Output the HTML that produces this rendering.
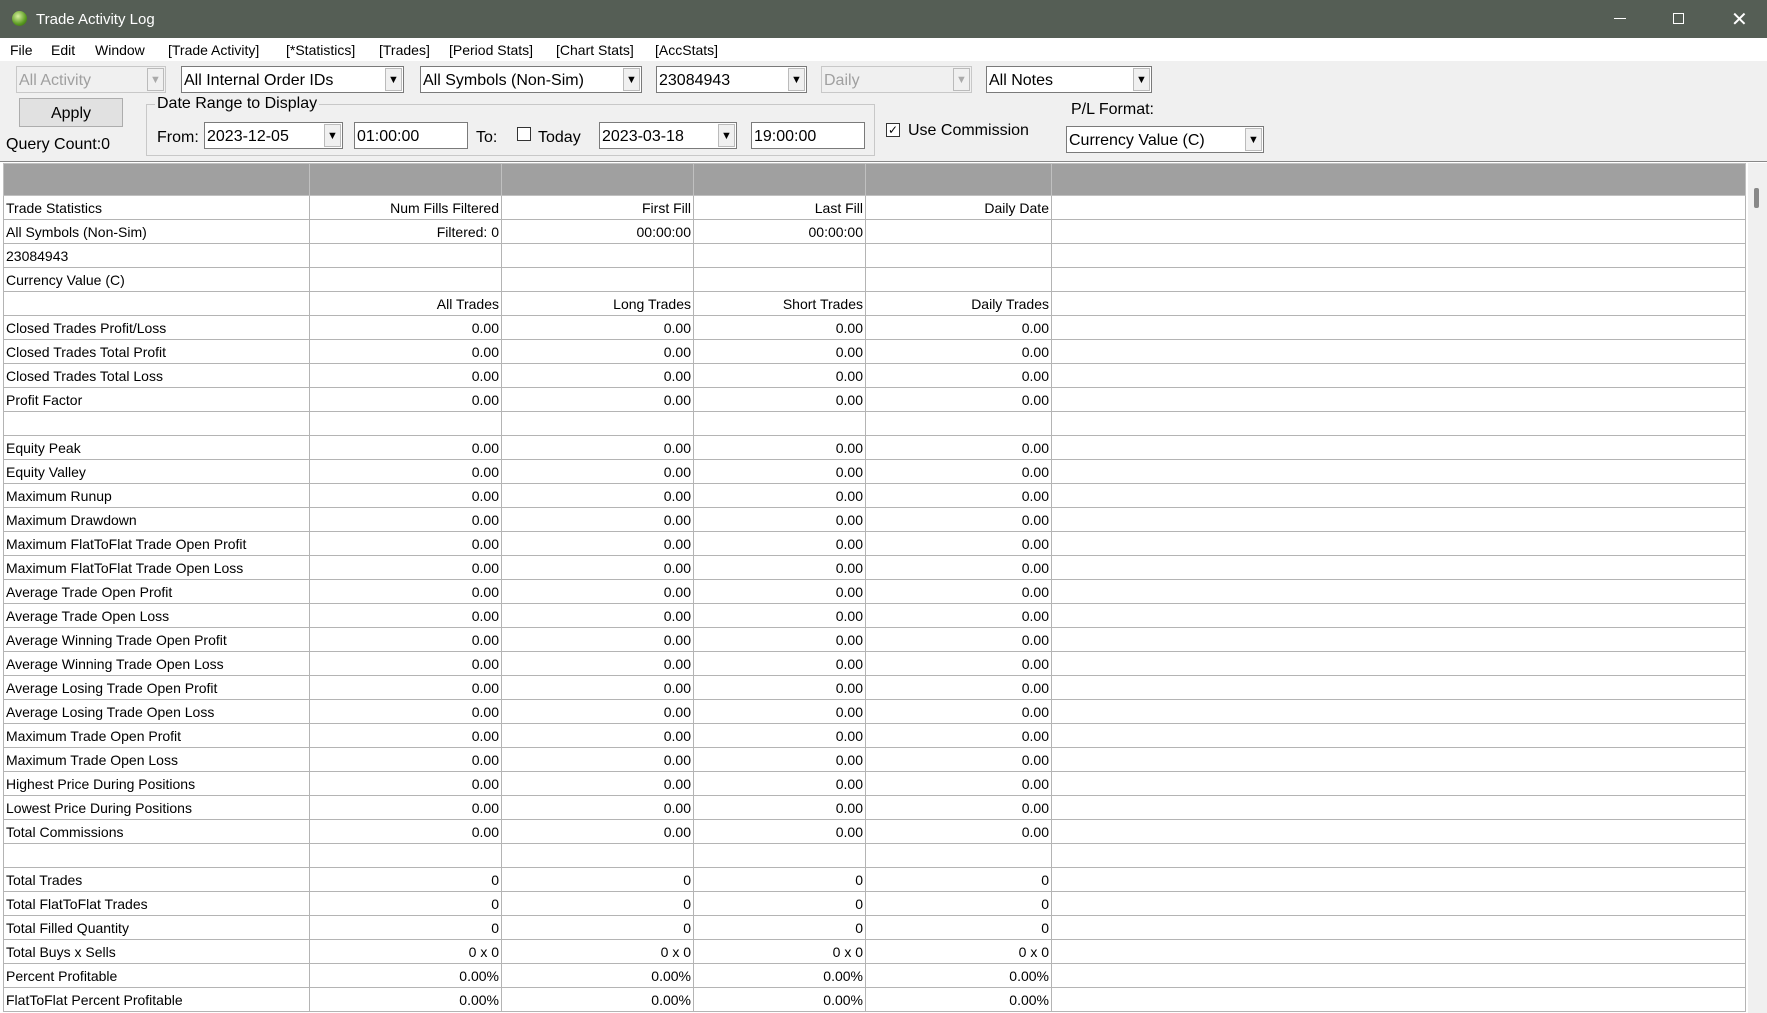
<!DOCTYPE html>
<html><head><meta charset="utf-8"><style>
*{box-sizing:border-box;margin:0;padding:0}
body{width:1767px;height:1013px;overflow:hidden;background:#f0f0f0;font-family:"Liberation Sans",sans-serif;position:relative}
.a{position:absolute}
.tb{left:0;top:0;width:1767px;height:38px;background:#555e55;color:#fff;font-size:15px}
.menu{left:0;top:38px;width:1767px;height:23px;background:#fff;font-size:14px}
.menu span{position:absolute;top:4px}
.cb{position:absolute;height:27px;background:#fff;border:1px solid #7a7a7a;font-size:16px;padding:5px 2px 0;white-space:nowrap;overflow:hidden}
.cb.d{background:#f0f0f0;color:#a0a0a0;border-color:#c8c8c8}
.cb .ar{position:absolute;right:1px;top:1px;bottom:1px;width:17px;background:#f0f0f0;border:1px solid #bbb;font-size:11px;text-align:center;line-height:22px;color:#000}
.cb.d .ar{color:#aaa}
.lbl{position:absolute;font-size:16px;white-space:nowrap}
.chk{position:absolute;width:14px;height:14px;border:1px solid #333;background:#fff;font-size:12px;line-height:12px;text-align:center}
table{position:absolute;left:3px;top:163px;border-collapse:collapse;table-layout:fixed;font-size:14px;background:#fff}
td{height:24px;border:1px solid #b4b4b4;text-align:right;padding:0 2px;white-space:nowrap;overflow:hidden;line-height:22px}
td:first-child{text-align:left}
tr.h td{height:32px;background:#a0a0a0;border-color:#c0c0c0}
</style></head><body>
<div class="a tb">
 <div class="a" style="left:12px;top:11px;width:15px;height:15px;border-radius:50%;background:radial-gradient(circle at 40% 35%,#d8f0a0,#5a9a20 60%,#2a5a10)"></div>
 <div class="a" style="left:36px;top:11px">Trade Activity Log</div>
 <div class="a" style="left:1614px;top:18px;width:12px;height:1px;background:#fff"></div>
 <div class="a" style="left:1673px;top:13px;width:11px;height:11px;border:1px solid #fff"></div>
 <div class="a" style="left:1731px;top:7px;font-size:20px;font-weight:200">✕</div>
</div>
<div class="a menu">
 <span style="left:10px">File</span><span style="left:51px">Edit</span><span style="left:95px">Window</span><span style="left:168px">[Trade Activity]</span><span style="left:286px">[*Statistics]</span><span style="left:379px">[Trades]</span><span style="left:449px">[Period Stats]</span><span style="left:556px">[Chart Stats]</span><span style="left:655px">[AccStats]</span>
</div>
<div class="cb d" style="left:16px;top:66px;width:150px">All Activity<div class="ar">▼</div></div>
<div class="cb" style="left:181px;top:66px;width:223px">All Internal Order IDs<div class="ar">▼</div></div>
<div class="cb" style="left:420px;top:66px;width:222px">All Symbols (Non-Sim)<div class="ar">▼</div></div>
<div class="cb" style="left:656px;top:66px;width:151px">23084943<div class="ar">▼</div></div>
<div class="cb d" style="left:821px;top:66px;width:151px">Daily<div class="ar">▼</div></div>
<div class="cb" style="left:986px;top:66px;width:166px">All Notes<div class="ar">▼</div></div>
<div class="a" style="left:19px;top:98px;width:104px;height:29px;background:#e1e1e1;border:1px solid #adadad;font-size:16px;text-align:center;line-height:29px">Apply</div>
<div class="lbl" style="left:6px;top:136px">Query Count:0</div>
<div class="a" style="left:146px;top:104px;width:729px;height:52px;border:1px solid #c8c8c8"></div>
<div class="lbl" style="left:155px;top:95px;background:#f0f0f0;padding:0 2px">Date Range to Display</div>
<div class="lbl" style="left:157px;top:129px">From:</div>
<div class="cb" style="left:204px;top:122px;width:139px">2023-12-05<div class="ar">▼</div></div>
<div class="cb" style="left:354px;top:122px;width:114px">01:00:00</div>
<div class="lbl" style="left:476px;top:129px">To:</div>
<div class="chk" style="left:517px;top:127px"></div>
<div class="lbl" style="left:538px;top:129px">Today</div>
<div class="cb" style="left:599px;top:122px;width:138px">2023-03-18<div class="ar">▼</div></div>
<div class="cb" style="left:751px;top:122px;width:114px">19:00:00</div>
<div class="chk" style="left:886px;top:123px">✓</div>
<div class="lbl" style="left:908px;top:122px">Use Commission</div>
<div class="lbl" style="left:1071px;top:101px">P/L Format:</div>
<div class="cb" style="left:1066px;top:126px;width:198px">Currency Value (C)<div class="ar">▼</div></div>
<div class="a" style="left:0;top:161px;width:1767px;height:852px;background:#fff;border-top:1px solid #888"></div>
<div class="a" style="left:1748px;top:163px;width:19px;height:850px;background:#f0f0f0"></div>
<div class="a" style="left:1754px;top:188px;width:5px;height:20px;background:#888;border-radius:2px"></div>
<table>
<colgroup><col style="width:306px"><col style="width:192px"><col style="width:192px"><col style="width:172px"><col style="width:186px"><col style="width:694px"></colgroup>
<tr class="h"><td></td><td></td><td></td><td></td><td></td><td></td></tr>
<tr><td>Trade Statistics</td><td>Num Fills Filtered</td><td>First Fill</td><td>Last Fill</td><td>Daily Date</td><td></td></tr>
<tr><td>All Symbols (Non-Sim)</td><td>Filtered: 0</td><td>00:00:00</td><td>00:00:00</td><td></td><td></td></tr>
<tr><td>23084943</td><td></td><td></td><td></td><td></td><td></td></tr>
<tr><td>Currency Value (C)</td><td></td><td></td><td></td><td></td><td></td></tr>
<tr><td></td><td>All Trades</td><td>Long Trades</td><td>Short Trades</td><td>Daily Trades</td><td></td></tr>
<tr><td>Closed Trades Profit/Loss</td><td>0.00</td><td>0.00</td><td>0.00</td><td>0.00</td><td></td></tr>
<tr><td>Closed Trades Total Profit</td><td>0.00</td><td>0.00</td><td>0.00</td><td>0.00</td><td></td></tr>
<tr><td>Closed Trades Total Loss</td><td>0.00</td><td>0.00</td><td>0.00</td><td>0.00</td><td></td></tr>
<tr><td>Profit Factor</td><td>0.00</td><td>0.00</td><td>0.00</td><td>0.00</td><td></td></tr>
<tr><td></td><td></td><td></td><td></td><td></td><td></td></tr>
<tr><td>Equity Peak</td><td>0.00</td><td>0.00</td><td>0.00</td><td>0.00</td><td></td></tr>
<tr><td>Equity Valley</td><td>0.00</td><td>0.00</td><td>0.00</td><td>0.00</td><td></td></tr>
<tr><td>Maximum Runup</td><td>0.00</td><td>0.00</td><td>0.00</td><td>0.00</td><td></td></tr>
<tr><td>Maximum Drawdown</td><td>0.00</td><td>0.00</td><td>0.00</td><td>0.00</td><td></td></tr>
<tr><td>Maximum FlatToFlat Trade Open Profit</td><td>0.00</td><td>0.00</td><td>0.00</td><td>0.00</td><td></td></tr>
<tr><td>Maximum FlatToFlat Trade Open Loss</td><td>0.00</td><td>0.00</td><td>0.00</td><td>0.00</td><td></td></tr>
<tr><td>Average Trade Open Profit</td><td>0.00</td><td>0.00</td><td>0.00</td><td>0.00</td><td></td></tr>
<tr><td>Average Trade Open Loss</td><td>0.00</td><td>0.00</td><td>0.00</td><td>0.00</td><td></td></tr>
<tr><td>Average Winning Trade Open Profit</td><td>0.00</td><td>0.00</td><td>0.00</td><td>0.00</td><td></td></tr>
<tr><td>Average Winning Trade Open Loss</td><td>0.00</td><td>0.00</td><td>0.00</td><td>0.00</td><td></td></tr>
<tr><td>Average Losing Trade Open Profit</td><td>0.00</td><td>0.00</td><td>0.00</td><td>0.00</td><td></td></tr>
<tr><td>Average Losing Trade Open Loss</td><td>0.00</td><td>0.00</td><td>0.00</td><td>0.00</td><td></td></tr>
<tr><td>Maximum Trade Open Profit</td><td>0.00</td><td>0.00</td><td>0.00</td><td>0.00</td><td></td></tr>
<tr><td>Maximum Trade Open Loss</td><td>0.00</td><td>0.00</td><td>0.00</td><td>0.00</td><td></td></tr>
<tr><td>Highest Price During Positions</td><td>0.00</td><td>0.00</td><td>0.00</td><td>0.00</td><td></td></tr>
<tr><td>Lowest Price During Positions</td><td>0.00</td><td>0.00</td><td>0.00</td><td>0.00</td><td></td></tr>
<tr><td>Total Commissions</td><td>0.00</td><td>0.00</td><td>0.00</td><td>0.00</td><td></td></tr>
<tr><td></td><td></td><td></td><td></td><td></td><td></td></tr>
<tr><td>Total Trades</td><td>0</td><td>0</td><td>0</td><td>0</td><td></td></tr>
<tr><td>Total FlatToFlat Trades</td><td>0</td><td>0</td><td>0</td><td>0</td><td></td></tr>
<tr><td>Total Filled Quantity</td><td>0</td><td>0</td><td>0</td><td>0</td><td></td></tr>
<tr><td>Total Buys x Sells</td><td>0 x 0</td><td>0 x 0</td><td>0 x 0</td><td>0 x 0</td><td></td></tr>
<tr><td>Percent Profitable</td><td>0.00%</td><td>0.00%</td><td>0.00%</td><td>0.00%</td><td></td></tr>
<tr><td>FlatToFlat Percent Profitable</td><td>0.00%</td><td>0.00%</td><td>0.00%</td><td>0.00%</td><td></td></tr>
</table>
</body></html>
